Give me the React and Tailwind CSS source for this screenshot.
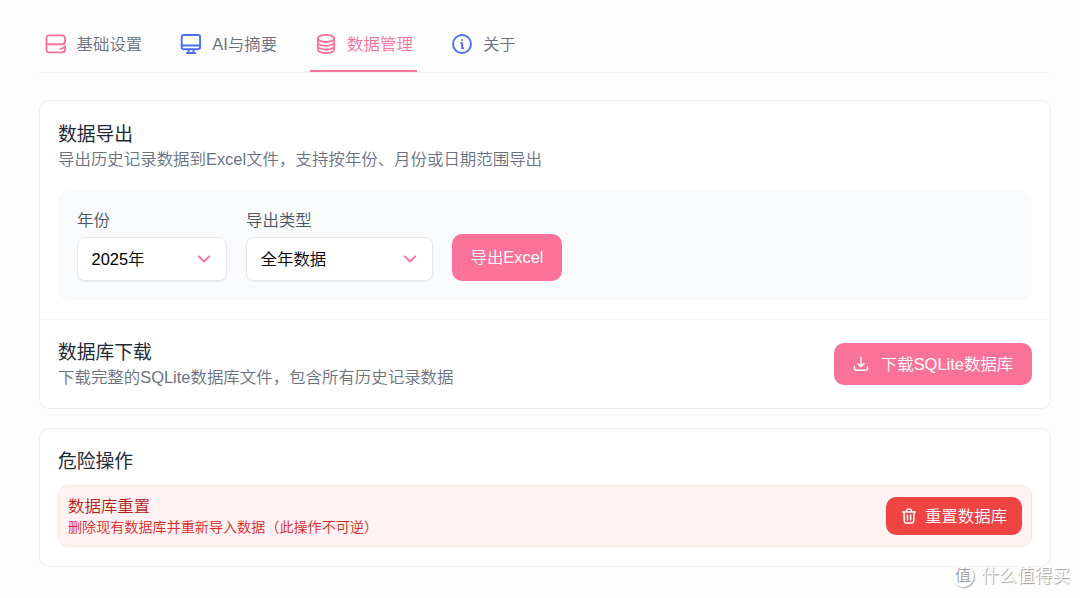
import React from 'react';

const ServerIcon = () => (
  <svg className="size-6 text-[#fb7299]" viewBox="0 0 24 24" fill="none" stroke="currentColor" strokeWidth="1.9" strokeLinecap="round" strokeLinejoin="round">
    <path d="M21 9V6a2.600 2.600 0 0 0-2.600-2.600H5.100A2.600 2.600 0 0 0 2.500 6v11.800a2.600 2.600 0 0 0 2.600 2.600h13.300a2.600 2.600 0 0 0 2.600-2.600v-2.800" />
    <path d="M2.500 12.200h15.500a3 3 0 0 0 3-3M21 14.200c-.8 1.100-1.800 1.900-3 2.300" />
    <path d="M16.800 16.800h.1" strokeWidth="2.2" />
  </svg>
);

const MonitorIcon = () => (
  <svg className="size-6 text-[#4f6ef7]" viewBox="0 0 24 24" fill="none" stroke="currentColor" strokeWidth="1.9" strokeLinecap="round" strokeLinejoin="round">
    <rect x="2.7" y="3" width="18.4" height="14.3" rx="2.2" />
    <path d="M3 13.5h18M9.8 17.6l-.5 3.2M14.2 17.6l.5 3.2M7.8 21h8.4" />
  </svg>
);

const DatabaseIcon = () => (
  <svg className="size-6" viewBox="0 0 24 24" fill="none" stroke="currentColor" strokeWidth="1.8" strokeLinecap="round" strokeLinejoin="round">
    <ellipse cx="12" cy="6.4" rx="8.2" ry="3.6" />
    <path d="M3.800 6.400v11.200c0 2 3.700 3.600 8.200 3.600s8.200-1.600 8.200-3.600V6.400M3.800 10.200c0 2 3.700 3.600 8.200 3.600s8.200-1.600 8.200-3.600M3.800 13.900c0 2 3.700 3.600 8.200 3.600s8.200-1.600 8.200-3.600" />
  </svg>
);

const InfoIcon = () => (
  <svg className="size-6 text-[#4f6ef7]" viewBox="0 0 24 24" fill="none" stroke="currentColor" strokeWidth="1.9" strokeLinecap="round" strokeLinejoin="round">
    <circle cx="12" cy="12" r="9" />
    <path d="M11.2 11.3h1v4.9h1M12.100 8h.01" />
  </svg>
);

const ChevronIcon = () => (
  <svg className="h-2 w-3.5 text-[#fb7299]" viewBox="0 0 14 8" fill="none" stroke="currentColor" strokeWidth="1.9" strokeLinecap="round" strokeLinejoin="round">
    <path d="M1.700 1.400 7 6.500l5.300-5.100" />
  </svg>
);

const DownloadIcon = () => (
  <svg className="size-4" viewBox="0 0 16 16" fill="none" stroke="currentColor" strokeWidth="1.5" strokeLinecap="round" strokeLinejoin="round">
    <path d="M8 1.500v9M4.800 7.500 8 10.600l3.200-3.100M1.500 10.800v1.500a2 2 0 0 0 2 2h9a2 2 0 0 0 2-2v-1.500" />
  </svg>
);

const TrashIcon = () => (
  <svg className="size-4" viewBox="0 0 16 16" fill="none" stroke="currentColor" strokeWidth="1.5" strokeLinecap="round" strokeLinejoin="round">
    <path d="M1.500 4h13M2.900 4l.5 9.400c.1 1 .7 1.500 1.600 1.500h6c.9 0 1.500-.5 1.600-1.500l.5-9.400M5.200 4l.5-1.900c.1-.6.500-.9 1.100-.9h2.400c.6 0 1 .3 1.100.9l.5 1.900M6.400 7V12M9.600 7V12" />
  </svg>
);

const tabs = [
  { label: '基础设置', icon: ServerIcon },
  { label: 'AI与摘要', icon: MonitorIcon },
  { label: '数据管理', icon: DatabaseIcon, active: true },
  { label: '关于', icon: InfoIcon },
];

function Select({ label, value, width }) {
  return (
    <div className={width}>
      <div className="-mt-px mb-[5px] h-6 leading-6 text-gray-600">{label}</div>
      <div className="flex h-11 items-center justify-between rounded-lg border border-gray-200 bg-white pr-[15px] pl-[13.5px] text-black shadow-xs">
        <span>{value}</span>
        <ChevronIcon />
      </div>
    </div>
  );
}

export default function App() {
  return (
    <div className="relative h-[598px] overflow-hidden bg-[#fdfdfd] pr-[29px] pl-[39px] font-['Liberation_Sans','Noto_Sans_CJK_SC',sans-serif] text-[16.45px] font-[350]">
      <nav className="flex h-[73px] gap-[28px] border-b border-gray-100">
        {tabs.map(({ label, icon: Icon, active }) => (
          <div
            key={label}
            className={`flex items-center gap-[9px] border-b-2 px-[4.5px] pt-[18px] ${active ? 'border-[#fb7299] text-[#fb7299]' : 'border-transparent text-gray-500'}`}
          >
            <Icon />
            <span>{label}</span>
          </div>
        ))}
      </nav>

      {/* Export and download */}
      <section className="mt-[27px] h-[309px] rounded-[10px] border border-gray-200/70 bg-white">
        <div className="h-[219px] border-b border-gray-100 px-[18px] pt-[21px]">
          <h2 className="text-[18.8px] leading-[26px] font-normal text-gray-800">数据导出</h2>
          <p className="-mt-px leading-6 text-gray-500">导出历史记录数据到Excel文件，支持按年份、月份或日期范围导出</p>
          <div className="mt-5 flex h-[109px] gap-[19px] rounded-[10px] bg-gray-50 px-[19px] pt-[18px]">
            <Select label="年份" value="2025年" width="w-[150px]" />
            <Select label="导出类型" value="全年数据" width="w-[187px]" />
            <button className="mt-[25px] h-[47px] w-[110px] rounded-[10px] bg-[#fb7299] text-white">导出Excel</button>
          </div>
        </div>
        <div className="flex h-[88px] items-center justify-between px-[18px]">
          <div>
            <h2 className="relative top-px text-[18.8px] leading-[26px] font-normal text-gray-800">数据库下载</h2>
            <p className="leading-6 text-gray-500">下载完整的SQLite数据库文件，包含所有历史记录数据</p>
          </div>
          <button className="flex h-[42px] w-[198px] items-center justify-center gap-3 rounded-[10px] bg-[#fb7299] text-white">
            <DownloadIcon />
            <span>下载SQLite数据库</span>
          </button>
        </div>
      </section>

      {/* Danger zone */}
      <section className="mt-[19px] h-[139px] rounded-[10px] border border-gray-200/70 bg-white px-[18px] pt-5">
        <h2 className="text-[18.8px] leading-[26px] font-normal text-gray-800">危险操作</h2>
        <div className="mt-[10px] flex h-[62px] items-center justify-between rounded-[10px] border border-red-100 bg-[#fef2f2] px-[9px]">
          <div className="-mt-px">
            <h3 className="leading-[22px] text-[#b91c1c]">数据库重置</h3>
            <p className="text-[14.1px] leading-5 text-[#dc2626]">删除现有数据库并重新导入数据（此操作不可逆）</p>
          </div>
          <button className="flex h-[38px] w-[136px] items-center justify-center gap-2 rounded-[10px] bg-[#ef4444] text-white">
            <TrashIcon />
            <span>重置数据库</span>
          </button>
        </div>
      </section>

      <div className="absolute right-[10px] bottom-[10px] flex items-center gap-[7px] text-[17.8px] leading-6 text-white [text-shadow:1px_1px_1px_#999]">
        <span className="flex size-[22px] items-center justify-center rounded-full bg-white text-[16px] text-gray-400 shadow-[1px_1px_1px_#aaa] [text-shadow:none]">值</span>
        <span>什么值得买</span>
      </div>
    </div>
  );
}
